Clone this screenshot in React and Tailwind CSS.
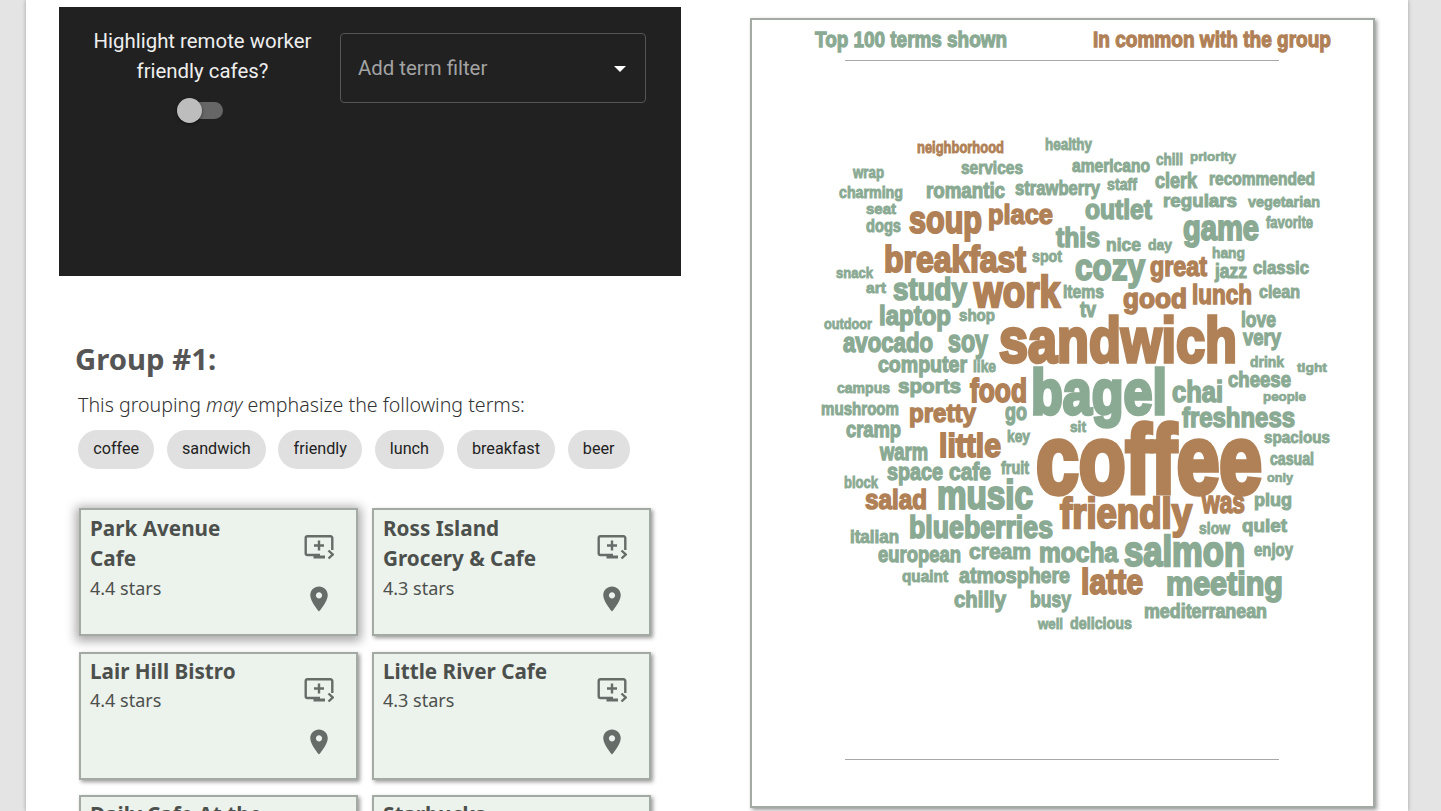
const G = '#8aaa93'
const B = '#b08156'

// word, left, right, baseline, ascender height, colour
const WORDS = [
  ['neighborhood', 917, 1004, 153, 12, B], ['healthy', 1045, 1092, 150, 12, G], ['wrap', 853, 884, 178, 12, G],
  ['services', 961, 1023, 174, 13, G], ['americano', 1072, 1150, 172, 14, G], ['chill', 1156, 1183, 165, 12, G],
  ['priority', 1190, 1236, 161, 10, G], ['charming', 839, 903, 198, 12, G], ['romantic', 926, 1005, 198, 16, G],
  ['strawberry', 1015, 1100, 195, 15, G], ['staff', 1107, 1137, 190, 12, G], ['clerk', 1155, 1197, 188, 16, G],
  ['recommended', 1209, 1315, 185, 14, G], ['regulars', 1163, 1237, 207, 14, G], ['vegetarian', 1248, 1320, 207, 11, G],
  ['seat', 866, 896, 214, 11, G], ['dogs', 866, 901, 232, 13, G], ['soup', 909, 982, 233, 29, B],
  ['place', 988, 1053, 224, 20, B], ['outlet', 1085, 1152, 219, 20, G], ['game', 1183, 1259, 240, 26, G],
  ['favorite', 1266, 1313, 228, 12, G], ['this', 1056, 1100, 247, 20, G], ['nice', 1106, 1141, 251, 13, G],
  ['day', 1148, 1172, 250, 11, G], ['hang', 1212, 1245, 258, 11, G], ['breakfast', 884, 1026, 272, 28, B],
  ['spot', 1032, 1062, 262, 12, G], ['cozy', 1075, 1145, 280, 28, G], ['great', 1150, 1207, 276, 20, B],
  ['jazz', 1215, 1247, 278, 15, G], ['classic', 1253, 1309, 274, 13, G], ['snack', 836, 873, 278, 11, G],
  ['art', 866, 886, 293, 11, G], ['study', 893, 967, 300, 23, G], ['work', 974, 1060, 307, 33, B],
  ['items', 1063, 1104, 298, 14, G], ['good', 1123, 1187, 308, 21, B], ['lunch', 1192, 1252, 304, 20, B],
  ['clean', 1259, 1300, 298, 13, G], ['tv', 1080, 1096, 317, 16, G], ['laptop', 879, 951, 325, 20, G],
  ['shop', 959, 995, 321, 12, G], ['outdoor', 824, 872, 329, 11, G], ['love', 1241, 1276, 327, 16, G],
  ['avocado', 843, 933, 352, 21, G], ['soy', 948, 988, 352, 23, G], ['very', 1243, 1281, 345, 17, G],
  ['sandwich', 999, 1237, 362, 47, B], ['computer', 878, 967, 372, 17, G], ['like', 973, 996, 372, 12, G],
  ['drink', 1250, 1284, 367, 11, G], ['tight', 1297, 1327, 372, 10, G], ['cheese', 1228, 1291, 387, 16, G],
  ['campus', 837, 890, 393, 11, G], ['sports', 898, 961, 393, 15, G], ['food', 970, 1027, 402, 25, B],
  ['bagel', 1031, 1167, 414, 46, G], ['chai', 1172, 1223, 402, 22, G], ['people', 1263, 1306, 401, 10, G],
  ['mushroom', 821, 899, 415, 14, G], ['pretty', 909, 976, 422, 19, B], ['go', 1005, 1027, 420, 18, G],
  ['freshness', 1182, 1295, 427, 21, G], ['sit', 1070, 1086, 432, 11, G], ['cramp', 846, 901, 437, 17, G],
  ['key', 1007, 1030, 442, 12, G], ['spacious', 1264, 1330, 443, 12, G], ['warm', 880, 928, 460, 18, G],
  ['little', 939, 1001, 457, 25, B], ['coffee', 1036, 1262, 493, 71, B], ['casual', 1270, 1314, 465, 13, G],
  ['space', 887, 943, 480, 18, G], ['cafe', 949, 991, 480, 18, G], ['fruit', 1001, 1029, 474, 13, G],
  ['only', 1267, 1293, 482, 10, G], ['block', 844, 878, 488, 12, G], ['salad', 865, 927, 509, 21, B],
  ['music', 937, 1033, 509, 30, G], ['friendly', 1060, 1192, 528, 31, B], ['was', 1202, 1245, 513, 23, B],
  ['plug', 1254, 1292, 506, 14, G], ['blueberries', 909, 1053, 538, 23, G], ['slow', 1199, 1230, 534, 12, G],
  ['quiet', 1242, 1287, 532, 14, G], ['italian', 850, 899, 543, 13, G], ['european', 878, 961, 562, 17, G],
  ['cream', 969, 1031, 559, 16, G], ['mocha', 1039, 1118, 562, 20, G], ['salmon', 1124, 1245, 566, 31, G],
  ['enjoy', 1254, 1293, 556, 13, G], ['quaint', 902, 948, 582, 12, G], ['atmosphere', 959, 1070, 583, 16, G],
  ['latte', 1081, 1143, 594, 26, B], ['meeting', 1166, 1283, 595, 24, G], ['chilly', 954, 1006, 607, 17, G],
  ['busy', 1030, 1071, 607, 17, G], ['mediterranean', 1144, 1267, 618, 15, G], ['well', 1038, 1063, 629, 11, G],
  ['delicious', 1070, 1132, 629, 12, G],
]

const TERMS = ['coffee', 'sandwich', 'friendly', 'lunch', 'breakfast', 'beer']

const CAFES = [
  { name: ['Park Avenue', 'Cafe'], stars: '4.4 stars', big: true },
  { name: ['Ross Island', 'Grocery & Cafe'], stars: '4.3 stars' },
  { name: ['Lair Hill Bistro'], stars: '4.4 stars' },
  { name: ['Little River Cafe'], stars: '4.3 stars' },
  { name: ['Daily Cafe At the'], stars: '4.3 stars' },
  { name: ['Starbucks'], stars: '4.2 stars' },
]

function CloudWord({ text, x1, x2, y, h, color }) {
  const size = h / 0.74
  return (
    <text
      x={x1}
      y={y}
      textLength={x2 - x1}
      lengthAdjust="spacingAndGlyphs"
      fontSize={size}
      fill={color}
      stroke={color}
      strokeWidth={size * 0.055}
      fontWeight="700"
      fontFamily="'Liberation Sans Narrow', 'Liberation Sans', sans-serif"
    >
      {text}
    </text>
  )
}

function QueueIcon() {
  return (
    <svg width="30" height="25" viewBox="0 0 30 25" fill="none" className="block">
      <path d="M16 20H3.500a1.800 1.800 0 0 1-1.800-1.800V3a1.800 1.800 0 0 1 1.800-1.800h23a1.800 1.800 0 0 1 1.800 1.800V15" stroke="#666c68" strokeWidth="2.400" />
      <path d="M15 5.500v10M10 10.500h10" stroke="#666c68" strokeWidth="2.400" />
      <path d="M9.500 20.500h11.500v3H9.500z" fill="#666c68" />
      <path d="M24.500 15.500l4.200 4-4.200 4" stroke="#666c68" strokeWidth="2.400" />
    </svg>
  )
}

function PinIcon() {
  return (
    <svg width="30" height="30" viewBox="0 0 24 24" className="block">
      <path fill="#666c68" d="M12 2C8.130 2 5 5.130 5 9c0 5.250 7 13 7 13s7-7.750 7-13c0-3.870-3.130-7-7-7zm0 9.500c-1.380 0-2.500-1.120-2.500-2.500s1.120-2.500 2.500-2.500 2.500 1.120 2.500 2.500-1.120 2.500-2.500 2.500z" />
    </svg>
  )
}

function CafeCard({ cafe }) {
  const twoLines = cafe.name.length > 1
  return (
    <div className={`flex h-[128px] justify-between border-2 border-[#a2aaa3] bg-[#ecf2ec] pl-[9px] pr-[22px] ${cafe.big ? 'shadow-[0_2px_10px_3px_rgba(0,0,0,0.35)]' : 'shadow-[2px_2px_4px_rgba(0,0,0,0.4)]'}`}>
      <div className={`text-[#4c504d] ${twoLines ? 'pt-[3px]' : 'pt-[2px]'}`}>
        {cafe.name.map((line) => (
          <div key={line} className="text-[20.700px] font-bold leading-[30px]">{line}</div>
        ))}
        <div className={`text-[18px] ${twoLines ? 'leading-[30px]' : 'leading-[29px]'}`}>{cafe.stars}</div>
      </div>
      <div className={`flex w-[30px] shrink-0 flex-col items-center ${twoLines ? 'pt-[25px]' : 'pt-[24px]'}`}>
        <QueueIcon />
        <div className="mt-[24px]"><PinIcon /></div>
      </div>
    </div>
  )
}

export default function App() {
  return (
    <div className="h-[811px] overflow-hidden bg-[#e4e4e4] font-['Noto_Sans',sans-serif]">
      <div className="mx-[26px] flex h-full w-[1382px] bg-white shadow-[0_0_4px_rgba(0,0,0,0.3)]">
        {/* left column */}
        <div className="ml-[33px] w-[622px] shrink-0 pt-[7px]">
          <div className="flex h-[269px] bg-[#212121] font-['Roboto',sans-serif]">
            <div className="w-[281px] shrink-0 pt-[19px] text-center text-[20.400px] leading-[30px] text-[#eeeeee]">
              <div className="pl-[6px]">Highlight remote worker</div>
              <div className="pl-[6px]">friendly cafes?</div>
              <div className="relative mx-auto mt-[12px] h-[25px] w-[46px]">
                <div className="absolute left-[6px] top-[4px] h-[17px] w-[40px] rounded-full bg-[#666666]" />
                <div className="absolute left-0 top-0 h-[25px] w-[25px] rounded-full bg-[#bdbdbd] shadow-[0_1px_3px_rgba(0,0,0,0.5)]" />
              </div>
            </div>
            <div className="mt-[26px] flex h-[70px] w-[306px] items-start justify-between rounded border border-[#555555] pl-[17px] pr-[19px] pt-[19px] text-[20.400px] leading-[30px] text-[#a3a3a3]">
              <span>Add term filter</span>
              <span className="mt-[13px] h-0 w-0 border-x-[6px] border-t-[6px] border-x-transparent border-t-white" />
            </div>
          </div>

          <h2 className="ml-[16px] mt-[65px] text-[29.300px] font-bold leading-[36px] text-[#555555]">Group #1:</h2>
          <p className="ml-[19px] mt-[14px] text-[19.600px] font-light leading-[28px] text-[#333333]">
            This grouping <em>may</em> emphasize the following terms:
          </p>
          <div className="ml-[19px] mt-[11px] flex gap-[12.500px] font-['Roboto',sans-serif]">
            {TERMS.map((t) => (
              <span key={t} className="flex h-[39px] items-center rounded-full bg-[#e0e0e0] px-[15.200px] text-[16.200px] text-[#222222]">{t}</span>
            ))}
          </div>

          <div className="ml-[20px] mt-[39px] grid w-[572px] grid-cols-[279px_279px] gap-x-[14px] gap-y-[15.500px]">
            {CAFES.map((c) => <CafeCard key={c.name[0]} cafe={c} />)}
          </div>
        </div>

        {/* word cloud */}
        <div className="ml-[69px] mt-[18px] h-[790px] w-[625px] shrink-0 border-2 border-[#a2aaa3] bg-white shadow-[2px_2px_4px_rgba(0,0,0,0.4)]">
          <svg width="621" height="786" viewBox="752 20 621 786" className="block">
            <CloudWord text="Top 100 terms shown" x1={815} x2={1007} y={47} h={17} color={G} />
            <CloudWord text="In common with the group" x1={1093} x2={1331} y={47} h={17} color={B} />
            <line x1="845" x2="1279" y1="60.500" y2="60.500" stroke="#a8a8a8" />
            <line x1="845" x2="1279" y1="759.500" y2="759.500" stroke="#a8a8a8" />
            {WORDS.map(([text, x1, x2, y, h, color]) => (
              <CloudWord key={text} text={text} x1={x1} x2={x2} y={y} h={h} color={color} />
            ))}
          </svg>
        </div>
      </div>
    </div>
  )
}
